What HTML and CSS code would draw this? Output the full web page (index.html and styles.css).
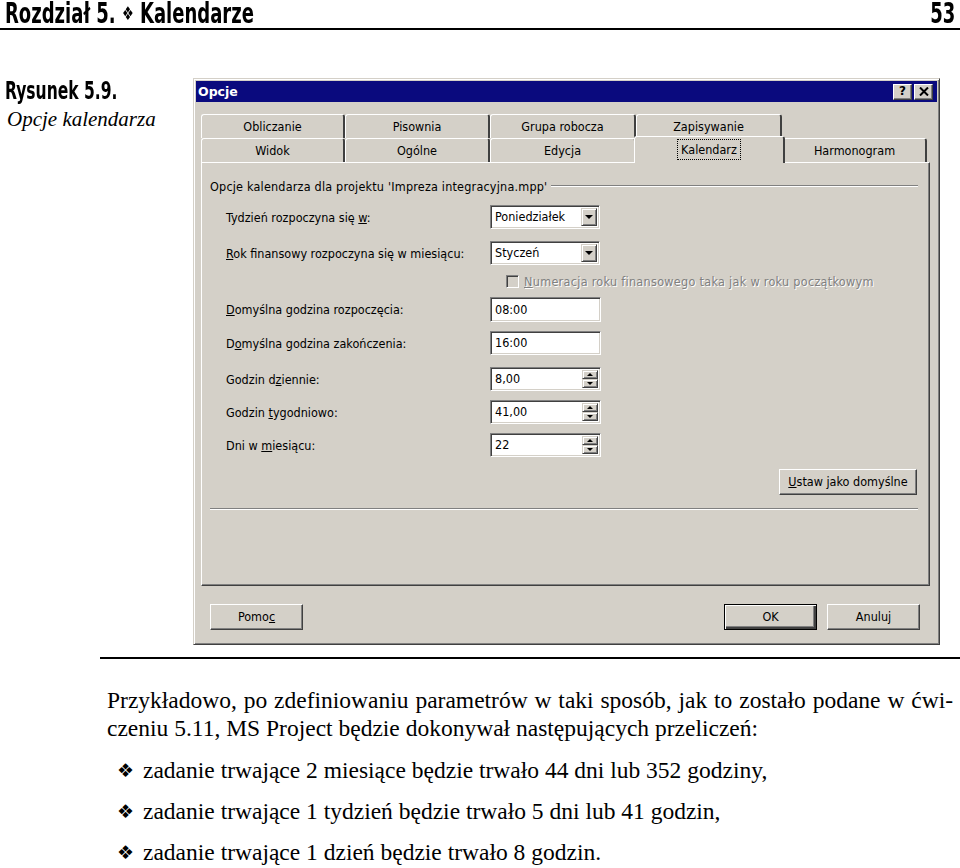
FILE: index.html
```html
<!DOCTYPE html>
<html lang="pl">
<head>
<meta charset="utf-8">
<title>Rozdział 5. Kalendarze</title>
<link rel="stylesheet" href="styles.css">
</head>
<body>
<header class="page-head">
  <span class="chap">Rozdział 5. <span class="dia">❖</span> Kalendarze</span>
  <span class="pno">53</span>
</header>

<section class="figure">
  <div class="caption">
    <div class="fig-no">Rysunek 5.9.</div>
    <div class="fig-title">Opcje kalendarza</div>
  </div>

  <div class="dialog">
    <div class="titlebar">
      <span class="title">Opcje</span>
      <div class="tb-btns">
        <span class="tb-btn">?</span>
        <span class="tb-btn">
          <svg width="10" height="9" viewBox="0 0 10 9"><path d="M1 0.5 L9 8.5 M9 0.5 L1 8.5" stroke="#000" stroke-width="2"/></svg>
        </span>
      </div>
    </div>

    <div class="dlg-body">
      <div class="tabs">
        <div class="tab-row back">
          <div class="tab">Obliczanie</div>
          <div class="tab">Pisownia</div>
          <div class="tab">Grupa robocza</div>
          <div class="tab">Zapisywanie</div>
        </div>
        <div class="tab-row front">
          <div class="tab">Widok</div>
          <div class="tab">Ogólne</div>
          <div class="tab">Edycja</div>
          <div class="tab active"><span class="focus">Kalendarz</span></div>
          <div class="tab">Harmonogram</div>
        </div>
      </div>

      <div class="panel">
        <div class="group-head">
          <span>Opcje kalendarza dla projektu 'Impreza integracyjna.mpp'</span>
          <span class="etch"></span>
        </div>

        <div class="row r1">
          <span class="lbl">Tydzień rozpoczyna się <u>w</u>:</span>
          <div class="field combo"><span class="val">Poniedziałek</span><span class="drop"><i class="tri"></i></span></div>
        </div>
        <div class="row r2">
          <span class="lbl"><u>R</u>ok finansowy rozpoczyna się w miesiącu:</span>
          <div class="field combo"><span class="val">Styczeń</span><span class="drop"><i class="tri"></i></span></div>
        </div>
        <div class="row chk-row">
          <span></span>
          <div class="chk"><span class="box"></span><span class="dis"><u>N</u>umeracja roku finansowego taka jak w roku początkowym</span></div>
        </div>
        <div class="row r3">
          <span class="lbl"><u>D</u>omyślna godzina rozpoczęcia:</span>
          <div class="field plain"><span class="val">08:00</span></div>
        </div>
        <div class="row r4">
          <span class="lbl">D<u>o</u>myślna godzina zakończenia:</span>
          <div class="field plain"><span class="val">16:00</span></div>
        </div>
        <div class="row r5">
          <span class="lbl">Godzin d<u>z</u>iennie:</span>
          <div class="field spin"><span class="val">8,00</span><span class="spn"><span class="sb"><i class="up"></i></span><span class="sb"><i class="dn"></i></span></span></div>
        </div>
        <div class="row r6">
          <span class="lbl">Godzin <u>t</u>ygodniowo:</span>
          <div class="field spin"><span class="val">41,00</span><span class="spn"><span class="sb"><i class="up"></i></span><span class="sb"><i class="dn"></i></span></span></div>
        </div>
        <div class="row r7">
          <span class="lbl">Dni w <u>m</u>iesiącu:</span>
          <div class="field spin"><span class="val">22</span><span class="spn"><span class="sb"><i class="up"></i></span><span class="sb"><i class="dn"></i></span></span></div>
        </div>

        <div class="def-row">
          <button class="btn wide"><u>U</u>staw jako domyślne</button>
        </div>
        <div class="sep"></div>
      </div>

      <div class="btn-row">
        <button class="btn">Pomo<u>c</u></button>
        <span class="spacer"></span>
        <button class="btn default">OK</button>
        <button class="btn">Anuluj</button>
      </div>
    </div>
  </div>
</section>

<div class="rule"></div>

<section class="body-text">
  <p class="para">
    <span class="l1">Przykładowo, po zdefiniowaniu parametrów w taki sposób, jak to zostało podane w ćwi-</span>
    <span class="l2">czeniu 5.11, MS Project będzie dokonywał następujących przeliczeń:</span>
  </p>
  <ul class="bullets">
    <li><span class="bul">❖</span>zadanie trwające 2 miesiące będzie trwało 44 dni lub 352 godziny,</li>
    <li><span class="bul">❖</span>zadanie trwające 1 tydzień będzie trwało 5 dni lub 41 godzin,</li>
    <li><span class="bul">❖</span>zadanie trwające 1 dzień będzie trwało 8 godzin.</li>
  </ul>
</section>
</body>
</html>
```

FILE: styles.css
```css
* { box-sizing: border-box; }

body {
  margin: 0;
  width: 960px;
  background: #fff;
  color: #000;
  font-family: "Liberation Serif", "Times New Roman", serif;
}

/* ---------- page header ---------- */
.page-head {
  display: flex;
  justify-content: space-between;
  align-items: center;
  height: 30px;
  padding: 0 5px 2px 5px;
  border-bottom: 2px solid #000;
  font-family: "DejaVu Sans Condensed", "DejaVu Sans", sans-serif;
  font-weight: bold;
  font-size: 29px;
  line-height: 26px;
  white-space: nowrap;
}
.chap {
  display: inline-block;
  transform: scaleX(0.69);
  transform-origin: left center;
}
.pno {
  display: inline-block;
  transform: scaleX(0.69);
  transform-origin: right center;
}
.page-head .dia {
  font-family: "DejaVu Sans", sans-serif;
  font-size: 19px;
  font-weight: normal;
  vertical-align: 3px;
}

/* ---------- figure ---------- */
.figure {
  display: flex;
  margin-top: 48px;
}
.caption {
  width: 193px;
  padding: 2px 0 0 5px;
}
.fig-no {
  display: inline-block;
  font-family: "DejaVu Sans Condensed", "DejaVu Sans", sans-serif;
  font-weight: bold;
  font-size: 24px;
  line-height: 22px;
  white-space: nowrap;
  transform: scaleX(0.72);
  transform-origin: left center;
}
.fig-title {
  font-family: "Liberation Serif", serif;
  font-style: italic;
  font-size: 21px;
  line-height: 24px;
  margin-top: 4px;
  padding-left: 2px;
}

/* ---------- dialog ---------- */
.dialog {
  width: 747px;
  height: 567px;
  background: #d4d0c8;
  border: 1px solid;
  border-color: #d4d0c8 #404040 #404040 #d4d0c8;
  box-shadow: inset 1px 1px #fff, inset -1px -1px #808080;
  padding: 2px;
  font-family: "DejaVu Sans Condensed", "DejaVu Sans", sans-serif;
  font-size: 12.5px;
}
.titlebar {
  height: 21px;
  background: #0a0a7e;
  display: flex;
  align-items: center;
  justify-content: space-between;
  padding: 0 4px 0 2px;
}
.titlebar .title {
  color: #fff;
  font-family: "DejaVu Sans", sans-serif;
  font-weight: bold;
  font-size: 12.5px;
}
.tb-btns {
  display: flex;
  gap: 2px;
}
.tb-btn {
  width: 19px;
  height: 16px;
  background: #d4d0c8;
  border: 1px solid;
  border-color: #fff #404040 #404040 #fff;
  box-shadow: inset -1px -1px #808080;
  display: flex;
  align-items: center;
  justify-content: center;
  font-family: "DejaVu Sans", sans-serif;
  font-weight: bold;
  font-size: 12px;
  line-height: 1;
  padding-bottom: 1px;
}

.dlg-body {
  padding: 12px 0 0 5px;
}

/* tabs */
.tabs {
  position: relative;
  z-index: 2;
}
.tab-row {
  display: grid;
  height: 24px;
}
.tab-row.back { grid-template-columns: 144px 145px 146px 146px; }
.tab-row.front { grid-template-columns: 144px 145px 146px 147px 144px; }
.tab {
  background: #d4d0c8;
  border-top: 1px solid #fff;
  border-left: 1px solid #fff;
  border-right: 2px solid #404040;
  border-radius: 3px 3px 0 0;
  display: flex;
  align-items: center;
  justify-content: center;
  padding-bottom: 1px;
  white-space: nowrap;
}
.tab-row.front .tab {
  height: 24px;
}
.tab.active {
  position: relative;
  top: -2px;
  height: 27px !important;
  margin: 0 -2px;
  padding-bottom: 2px;
}
.focus {
  outline: 1px dotted #000;
  outline-offset: 2px;
  padding: 0 1px;
}

/* panel */
.panel {
  position: relative;
  z-index: 1;
  width: 729px;
  height: 424px;
  border: 1px solid;
  border-color: #fff #404040 #404040 #fff;
  box-shadow: inset -1px -1px #808080;
  padding: 15px 11px 0 8px;
}
.group-head {
  display: flex;
  align-items: center;
  gap: 4px;
  height: 16px;
  letter-spacing: 0.2px;
}
.etch {
  flex: 1;
  border-top: 1px solid #808080;
  border-bottom: 1px solid #fff;
}

.row {
  display: grid;
  grid-template-columns: 264px 111px;
  align-items: center;
  padding-left: 16px;
  height: 24px;
}
.r1 { margin-top: 11px; }
.r2 { margin-top: 12px; }
.chk-row { margin-top: 8px; height: 16px; }
.r3 { margin-top: 8px; height: 25px; }
.r4 { margin-top: 9px; }
.r5 { margin-top: 12px; }
.r6 { margin-top: 9px; }
.r7 { margin-top: 9px; }

.lbl { white-space: nowrap; }

.field {
  height: 100%;
  background: #fff;
  border: 1px solid;
  border-color: #808080 #fff #fff #808080;
  box-shadow: inset 1px 1px #404040, inset -1px -1px #d4d0c8;
  display: flex;
  align-items: stretch;
  padding: 2px;
}
.field.combo { width: 110px; }
.field .val {
  flex: 1;
  display: flex;
  align-items: center;
  padding-left: 2px;
  padding-bottom: 1px;
}
.drop {
  width: 16px;
  background: #d4d0c8;
  border: 1px solid;
  border-color: #d4d0c8 #404040 #404040 #d4d0c8;
  box-shadow: inset 1px 1px #fff, inset -1px -1px #808080;
  display: flex;
  align-items: center;
  justify-content: center;
}
.tri {
  width: 0;
  height: 0;
  border-left: 4px solid transparent;
  border-right: 4px solid transparent;
  border-top: 4px solid #000;
}
.spn {
  width: 16px;
  display: flex;
  flex-direction: column;
}
.sb {
  flex: 1;
  background: #d4d0c8;
  border: 1px solid;
  border-color: #d4d0c8 #404040 #404040 #d4d0c8;
  box-shadow: inset 1px 1px #fff, inset -1px -1px #808080;
  display: flex;
  align-items: center;
  justify-content: center;
}
.up, .dn {
  width: 0;
  height: 0;
  border-left: 3px solid transparent;
  border-right: 3px solid transparent;
}
.up { border-bottom: 3px solid #000; }
.dn { border-top: 3px solid #000; }

.chk {
  display: flex;
  align-items: center;
  gap: 5px;
  padding-left: 16px;
  white-space: nowrap;
}
.box {
  flex: 0 0 13px;
  width: 13px;
  height: 13px;
  background: #d4d0c8;
  border: 1px solid;
  border-color: #808080 #fff #fff #808080;
  box-shadow: inset 1px 1px #404040, inset -1px -1px #d4d0c8;
}
.dis {
  flex: 0 0 auto;
  color: #808080;
  text-shadow: 1px 1px #fff;
  letter-spacing: 0.3px;
}

.def-row {
  display: flex;
  justify-content: flex-end;
  margin-top: 12px;
  padding-right: 1px;
}
.sep {
  margin-top: 13px;
  border-top: 1px solid #808080;
  border-bottom: 1px solid #fff;
}

.btn {
  font: inherit;
  color: #000;
  height: 26px;
  width: 93px;
  padding: 0 0 1px;
  background: #d4d0c8;
  border: 1px solid;
  border-color: #fff #404040 #404040 #fff;
  box-shadow: inset -1px -1px #808080;
  border-radius: 0;
}
.btn.wide { width: 138px; }
.btn.default {
  border: 1px solid #000;
  box-shadow: inset 1px 1px #fff, inset -2px -2px #404040, inset -3px -3px #808080;
}
.btn-row {
  display: flex;
  gap: 10px;
  margin-top: 18px;
  padding: 0 10px 0 9px;
  width: 729px;
}
.spacer { flex: 1; }

/* ---------- rule & text ---------- */
.rule {
  margin: 12px 0 0 100px;
  border-top: 2px solid #000;
}
.body-text {
  padding: 0 7px 0 107px;
  font-family: "Liberation Serif", "Times New Roman", serif;
  font-size: 23.5px;
  line-height: 28px;
}
.para {
  margin: 27px 0 0;
}
.para span { display: block; white-space: nowrap; }
.para .l1 {
  text-align: justify;
  text-align-last: justify;
  white-space: normal;
}
.bullets {
  list-style: none;
  margin: 14px 0 0;
  padding: 0 0 0 10px;
}
.bullets li {
  margin-bottom: 13px;
  white-space: nowrap;
}
.bul {
  font-family: "DejaVu Sans", sans-serif;
  font-size: 19px;
  display: inline-block;
  width: 26px;
  vertical-align: 1px;
}
```
